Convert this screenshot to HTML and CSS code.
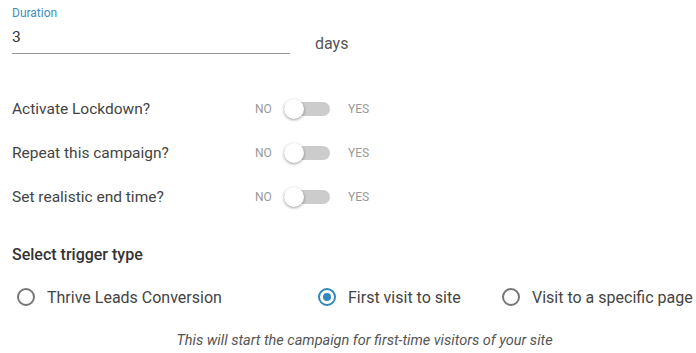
FILE: index.html
```html
<!DOCTYPE html>
<html>
<head>
<meta charset="utf-8">
<link rel="stylesheet" href="styles.css">
</head>
<body>
<div class="page">
  <div class="duration">
    <div class="field">
      <div class="field-label">Duration</div>
      <div class="field-input">3</div>
    </div>
    <div class="unit">days</div>
  </div>

  <div class="settings">
    <div class="setting">
      <div class="setting-label">Activate Lockdown?</div>
      <div class="switch"><span class="sw-no">NO</span><span class="track"><span class="thumb"></span></span><span class="sw-yes">YES</span></div>
    </div>
    <div class="setting">
      <div class="setting-label">Repeat this campaign?</div>
      <div class="switch"><span class="sw-no">NO</span><span class="track"><span class="thumb"></span></span><span class="sw-yes">YES</span></div>
    </div>
    <div class="setting">
      <div class="setting-label">Set realistic end time?</div>
      <div class="switch"><span class="sw-no">NO</span><span class="track"><span class="thumb"></span></span><span class="sw-yes">YES</span></div>
    </div>
  </div>

  <div class="trigger-title">Select trigger type</div>
  <div class="radios">
    <label class="radio r1"><span class="circle"></span><span class="radio-text">Thrive Leads Conversion</span></label>
    <label class="radio r2"><span class="circle checked"></span><span class="radio-text">First visit to site</span></label>
    <label class="radio r3"><span class="circle"></span><span class="radio-text">Visit to a specific page</span></label>
  </div>
  <div class="hint">This will start the campaign for first-time visitors of your site</div>
</div>
</body>
</html>
```

FILE: styles.css
```css
html, body {
  margin: 0;
  padding: 0;
  background: #fff;
}
body {
  font-family: Roboto, "Liberation Sans", sans-serif;
  color: #444;
}
.page {
  padding: 5px 0 0 12px;
  width: 684px;
}
.duration {
  display: flex;
  align-items: flex-end;
}
.field {
  width: 278px;
}
.field-label {
  font-size: 12px;
  color: #3d8ebf;
  line-height: 16px;
}
.field-input {
  font-size: 15.5px;
  color: #333;
  line-height: 20px;
  padding-top: 6px;
  padding-bottom: 6px;
  border-bottom: 1px solid #999;
}
.unit {
  font-size: 16px;
  color: #555;
  margin-left: 25px;
  line-height: 20px;
  margin-bottom: 0;
}
.settings {
  margin-top: 33px;
}
.setting {
  display: flex;
  align-items: center;
  height: 44px;
}
.setting-label {
  width: 243px;
  font-size: 15.5px;
  color: #444;
}
.switch {
  display: flex;
  align-items: center;
  font-size: 12px;
  color: #999;
}
.sw-no {
  width: 29px;
}
.track {
  position: relative;
  width: 46px;
  height: 14px;
  border-radius: 7px;
  background: #ccc;
}
.thumb {
  position: absolute;
  left: 0;
  top: -3px;
  width: 20px;
  height: 20px;
  border-radius: 50%;
  background: #fff;
  box-shadow: 0 1px 3px rgba(0,0,0,0.4);
}
.sw-yes {
  margin-left: 18px;
}
.trigger-title {
  margin-top: 26px;
  font-size: 16px;
  font-weight: 500;
  color: #333;
  line-height: 20px;
}
.radios {
  display: flex;
  align-items: center;
  margin-top: 20px;
  height: 24px;
}
.radio {
  display: flex;
  align-items: center;
  font-size: 16px;
  color: #444;
}
.r1 { margin-left: 5px; width: 301px; }
.r2 { width: 184px; }
.circle {
  box-sizing: border-box;
  width: 18px;
  height: 18px;
  border-radius: 50%;
  border: 2px solid #777;
  margin-right: 12px;
  position: relative;
}
.circle.checked {
  border-color: #2f8abb;
}
.circle.checked::after {
  content: "";
  position: absolute;
  left: 3px;
  top: 3px;
  width: 8px;
  height: 8px;
  border-radius: 50%;
  background: #2f8abb;
}
.hint {
  margin-top: 23px;
  padding-left: 21px;
  text-align: center;
  font-style: italic;
  font-size: 14.5px;
  color: #555;
}
```
